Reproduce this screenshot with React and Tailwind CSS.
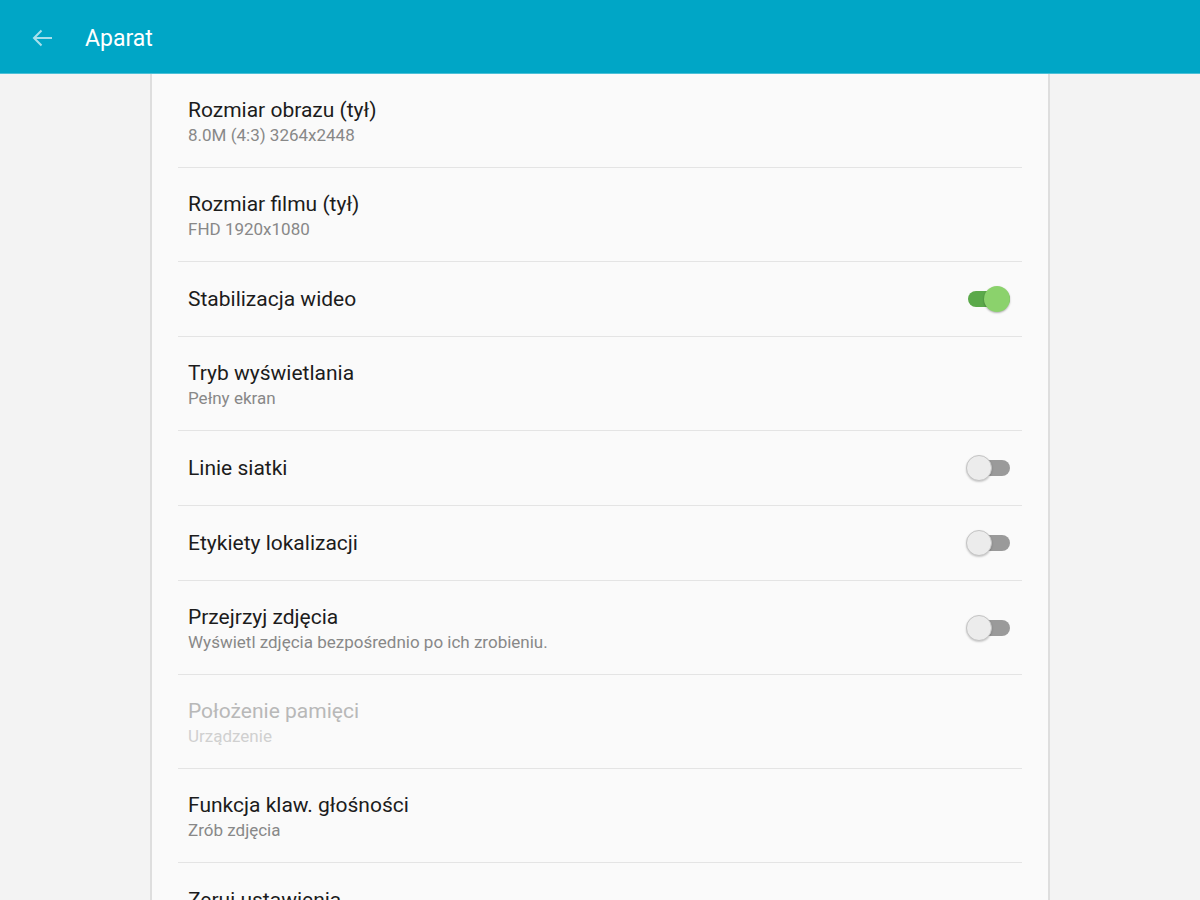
import React from 'react';

const rows = [
  { title: 'Rozmiar obrazu (tył)', sub: '8.0M (4:3) 3264x2448' },
  { title: 'Rozmiar filmu (tył)', sub: 'FHD 1920x1080' },
  { title: 'Stabilizacja wideo', toggle: true, on: true },
  { title: 'Tryb wyświetlania', sub: 'Pełny ekran' },
  { title: 'Linie siatki', toggle: true },
  { title: 'Etykiety lokalizacji', toggle: true },
  { title: 'Przejrzyj zdjęcia', sub: 'Wyświetl zdjęcia bezpośrednio po ich zrobieniu.', toggle: true },
  { title: 'Położenie pamięci', sub: 'Urządzenie', disabled: true },
  { title: 'Funkcja klaw. głośności', sub: 'Zrób zdjęcia' },
  { title: 'Zeruj ustawienia' },
];

function Toggle({ on }) {
  return (
    <div className="relative w-[44px] h-[26px] mr-[12px] shrink-0">
      <div className={`absolute left-[2px] right-0 top-[5px] h-[16px] rounded-full ${on ? 'bg-[#5ba94a]' : 'bg-[#9a9a9a]'}`} />
      {on ? (
        <div className="absolute right-0 top-0 w-[26px] h-[26px] rounded-full bg-[#8bd26c] shadow-[0_1px_2px_rgba(0,0,0,0.3)]" />
      ) : (
        <div className="absolute left-0 top-0 w-[26px] h-[26px] rounded-full bg-[#ececec] border border-[#c4c4c4] shadow-[0_1px_2px_rgba(0,0,0,0.2)]" />
      )}
    </div>
  );
}

export default function App() {
  return (
    <div className="w-[1200px] h-[900px] overflow-hidden bg-[#f3f3f3] flex flex-col" style={{ fontFamily: 'Roboto, "Noto Sans", sans-serif' }}>
      {/* Action bar */}
      <div className="h-[74px] shrink-0 bg-[#00a6c6] flex items-center pt-[3px] border-b border-[#4cc0d7]">
        <svg className="ml-[32px]" width="21" height="18" viewBox="0 0 21 18" fill="none">
          <path d="M20 9H2M9.5 1.5L2 9l7.5 7.5" stroke="#a8e0ec" strokeWidth="2" />
        </svg>
        <h1 className="ml-[32px] text-[23px] text-white leading-none">Aparat</h1>
      </div>

      {/* Settings list */}
      <div className="flex-1 mx-[150px] bg-[#fafafa] border-x-2 border-[#dedede]">
        <div className="px-[26px]">
          {rows.map((r, i) => (
            <div
              key={i}
              className={`flex items-center border-b border-[#e4e4e4] ${r.sub ? 'h-[94px]' : 'h-[75px]'}`}
            >
              <div className="flex-1 pl-[10px]">
                <p className={`text-[21px] leading-[26px] ${r.disabled ? 'text-[#b8b8b8]' : 'text-[#1c1c1c]'}`}>{r.title}</p>
                {r.sub && (
                  <p className={`text-[17px] leading-[20px] mt-[2px] ${r.disabled ? 'text-[#d0d0d0]' : 'text-[#888888]'}`}>{r.sub}</p>
                )}
              </div>
              {r.toggle && <Toggle on={r.on} />}
            </div>
          ))}
        </div>
      </div>
    </div>
  );
}
